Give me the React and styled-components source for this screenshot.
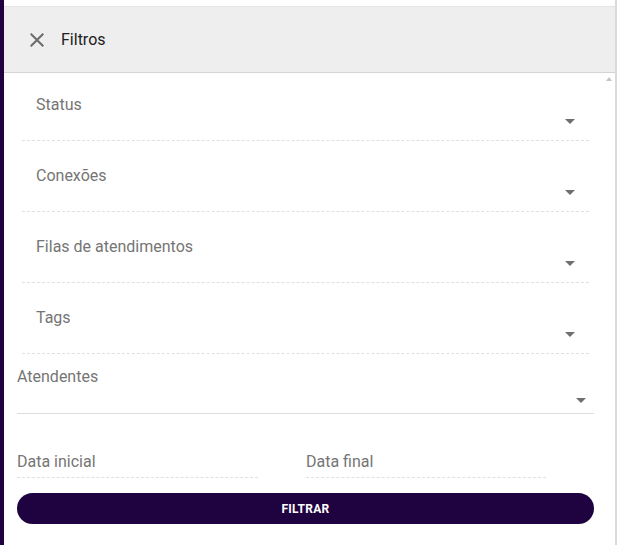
import React from 'react'
import styled, { createGlobalStyle } from 'styled-components';

const GlobalStyle = createGlobalStyle`
  body {
    margin: 0;
    background: #fff;
    font-family: Roboto, "Liberation Sans", sans-serif;
  }
`;

const Page = styled.div`
  display: flex;
  height: 545px;
  overflow: hidden;
`;

const SideStrip = styled.div`
  width: 4px;
  background-color: #1f0341;
`;

const Drawer = styled.div`
  width: 611px;
  padding-top: 6px;
  border-right: 2px solid #dadada;
  display: flex;
  flex-direction: column;
`;

const Header = styled.div`
  height: 65px;
  display: flex;
  align-items: center;
  gap: 12px;
  padding-left: 21px;
  background-color: #eeeeee;
  border-top: 1px solid #e4e4e4;
  border-bottom: 1px solid #d4d4d4;
`;

const Title = styled.span`
  font-size: 16px;
  color: #212121;
  margin-top: -1px;
`;

const Body = styled.div`
  position: relative;
  flex: 1;
  padding: 0 21px 0 13px;
`;

const ScrollArrow = styled.div`
  position: absolute;
  top: 4px;
  right: 3px;
  width: 0;
  height: 0;
  border-left: 3px solid transparent;
  border-right: 3px solid transparent;
  border-bottom: 4px solid #c4c4c4;
`;

const FieldList = styled.div`
  margin: -3px 5px 0 5px;
`;

const Field = styled.div`
  padding-top: 25px;
  border-bottom: 1px dashed #e0e0e0;
`;

const Label = styled.div`
  font-size: 16px;
  line-height: 20px;
  color: #757575;
  padding-left: ${p => p.indent || 0}px;
`;

const SelectRow = styled.div`
  height: ${p => p.h || 25}px;
  display: flex;
  justify-content: flex-end;
  align-items: flex-start;
  padding-right: ${p => p.pr || 14}px;
`;

const Arrow = styled.div`
  margin-top: ${p => p.top || 4}px;
  width: 0;
  height: 0;
  border-left: 5px solid transparent;
  border-right: 5px solid transparent;
  border-top: 5px solid #6f6f6f;
`;

const SolidField = styled.div`
  padding-top: 13px;
  border-bottom: 1px solid #dedede;
`;

const DateRow = styled.div`
  display: grid;
  grid-template-columns: 241px 240px;
  column-gap: 48px;
  margin-top: 38px;
`;

const DateField = styled.div`
  padding-bottom: 5px;
  border-bottom: 1px dashed #e0e0e0;
`;

const Button = styled.button`
  display: block;
  width: 100%;
  height: 31px;
  margin-top: 15px;
  border: none;
  border-radius: 16px;
  background-color: #1f0341;
  color: #fff;
  font-family: Roboto, "Liberation Sans", sans-serif;
  font-size: 12px;
  font-weight: 700;
  letter-spacing: 0.3px;
  cursor: pointer;
`;

const CloseIcon = () => (
  <svg width="24" height="24" viewBox="0 0 24 24" fill="#6b6b6b">
    <path d="M19 6.41 17.59 5 12 10.59 6.41 5 5 6.41 10.59 12 5 17.59 6.41 19 12 13.41 17.59 19 19 17.59 13.41 12z" />
  </svg>
);

const selects = ['Status', 'Conexões', 'Filas de atendimentos', 'Tags'];

export default function App() {
  return (
    <Page>
      <GlobalStyle />
      <SideStrip />
      <Drawer>
        <Header>
          <CloseIcon />
          <Title>Filtros</Title>
        </Header>
        <Body>
          <ScrollArrow />
          <FieldList>
            {selects.map((name) =>
              <Field key={name}>
                <Label indent={14}>{name}</Label>
                <SelectRow>
                  <Arrow />
                </SelectRow>
              </Field>
            )}
          </FieldList>
          <SolidField>
            <Label>Atendentes</Label>
            <SelectRow h={26} pr={8}>
              <Arrow top={11} />
            </SelectRow>
          </SolidField>
          <DateRow>
            <DateField>
              <Label>Data inicial</Label>
            </DateField>
            <DateField>
              <Label>Data final</Label>
            </DateField>
          </DateRow>
          <Button>FILTRAR</Button>
        </Body>
      </Drawer>
    </Page>
  )
}
